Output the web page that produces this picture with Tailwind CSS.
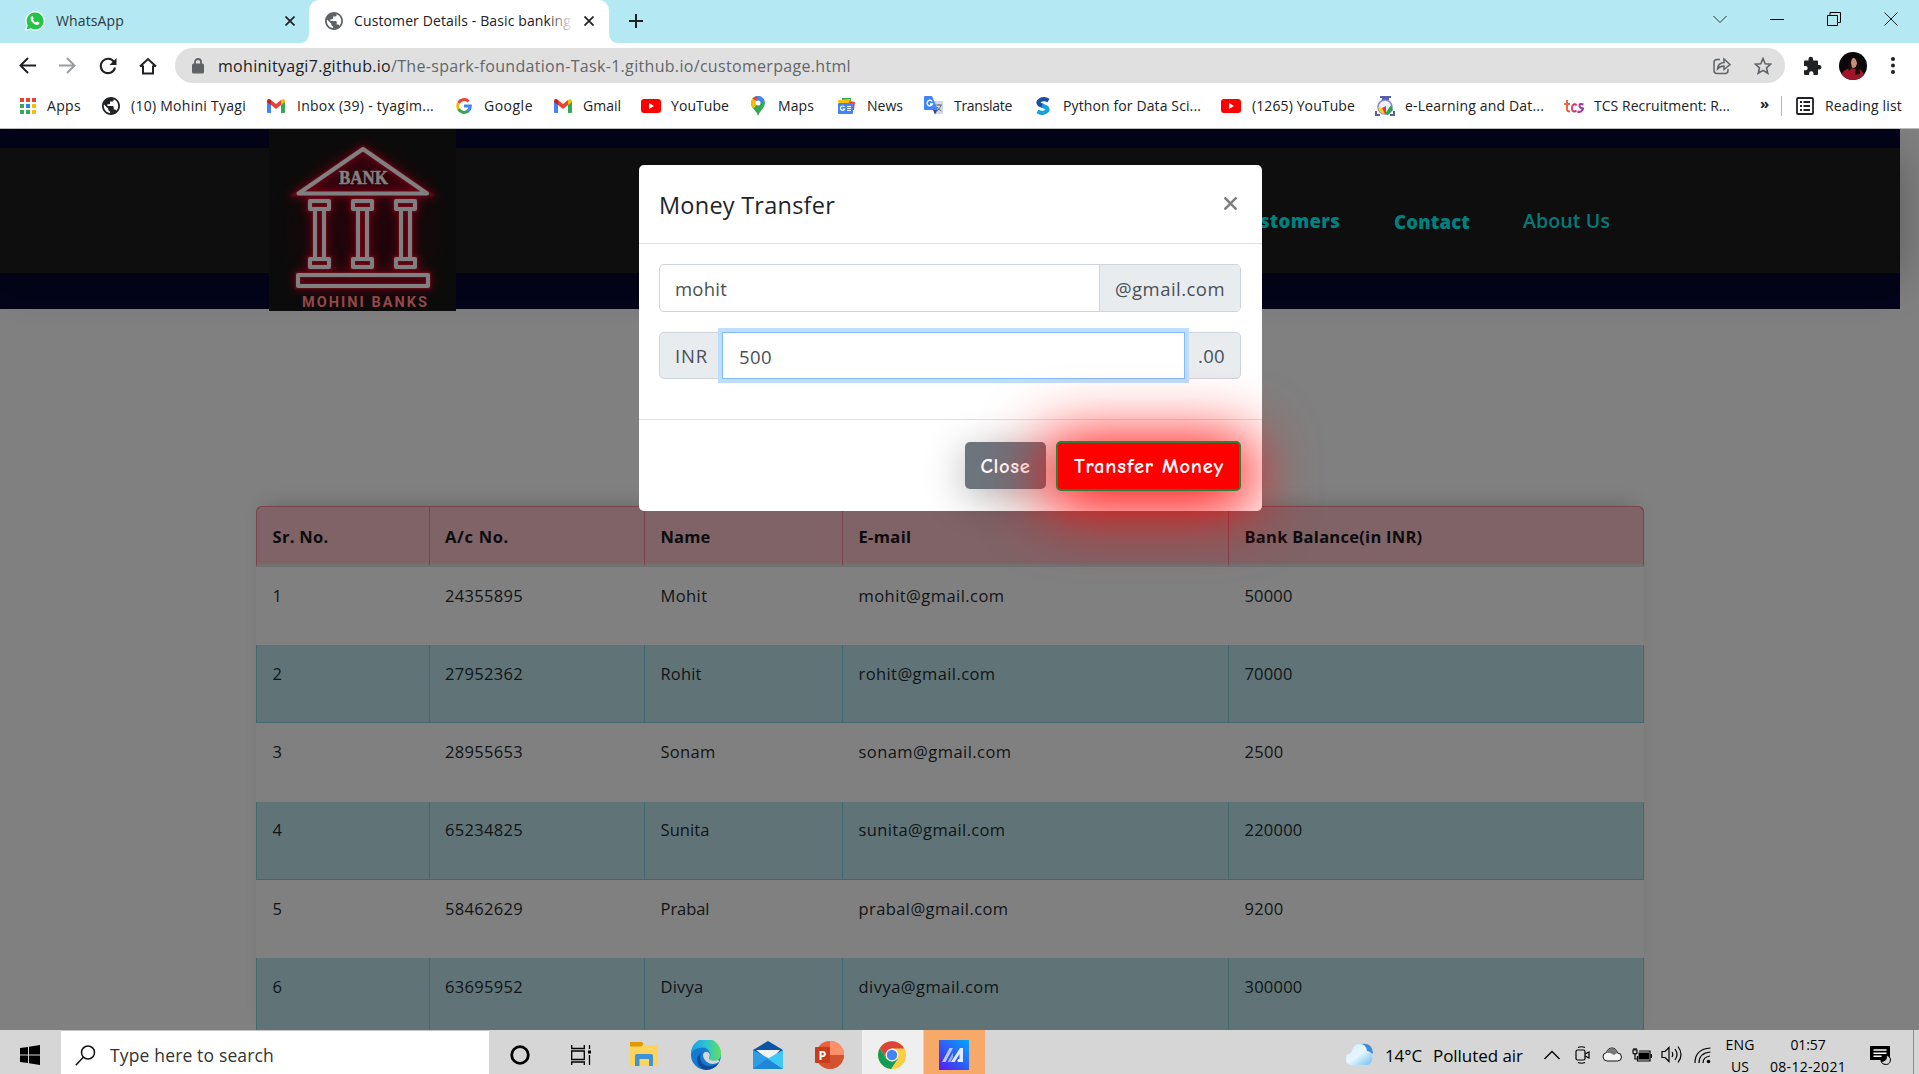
<!DOCTYPE html>
<html lang="en">
<head>
<meta charset="utf-8">
<title>Customer Details - Basic banking</title>
<script src="https://cdn.jsdelivr.net/npm/@tailwindcss/browser@4"></script>
</head>
<body class="w-[1919px] h-[1074px] overflow-hidden flex flex-col bg-white font-['Segoe_UI','Open_Sans',sans-serif] text-[#202124] whitespace-nowrap">
<svg class="hidden">
  <defs>
    <symbol id="gmail" viewBox="0 0 18 14"><path fill="#4285f4" d="M0 2v11q0 1 1 1h3V5z"/><path fill="#34a853" d="M14 14h3q1 0 1-1V2l-4 3z"/><path fill="#fbbc04" d="M14 1v5l4-3V2q0-2-2-2z"/><path fill="#ea4335" d="M4 6V1l5 4 5-4v5L9 10z"/><path fill="#c5221f" d="M0 2v1l4 3V1L3 .3Q0-.5 0 2"/></symbol>
    <symbol id="globe" viewBox="2 2 20 20"><path d="M12 2C6.480 2 2 6.480 2 12s4.480 10 10 10 10-4.480 10-10S17.520 2 12 2zm-1 17.930c-3.950-.49-7-3.850-7-7.930 0-.62.080-1.210.21-1.790L9 15v1c0 1.100.9 2 2 2v1.930zm6.900-2.540c-.26-.81-1-1.390-1.900-1.390h-1v-3c0-.55-.45-1-1-1H8v-2h2c.55 0 1-.45 1-1V7h2c1.100 0 2-.9 2-2v-.41c2.930 1.190 5 4.060 5 7.410 0 2.080-.8 3.970-2.100 5.390z"/></symbol>
    <symbol id="yt" viewBox="0 0 20 14"><rect width="20" height="14" rx="3" fill="#f00"/><path fill="#fff" d="M8 4v6l5-3z"/></symbol>
  </defs>
</svg>

<!-- tab strip -->
<header class="h-[43px] shrink-0 bg-[#b4e8f2] flex items-start text-[14px]">
  <div class="w-[309px] h-[43px] flex items-center pl-[25px] pb-[1px]">
    <svg class="w-5 h-5" viewBox="0 0 20 20"><path fill="#fff" d="M0 20 1.500 14.500A9.800 9.800 0 1 1 5.500 18.500z"/><path fill="#25c447" d="M1.500 18.500 2.800 14.300A8.500 8.500 0 1 1 5.800 17.300z"/><path fill="#fff" d="M6.500 5.500q1-1 1.500.2l.7 1.600q0 .5-.8 1.300 1.200 2.300 3.200 3 .8-1.200 1.300-1l1.800.9q.6.700-.3 1.800-1.600 1.500-4.600-.3Q5.800 10.600 5.600 8q0-1.600.9-2.500"/></svg>
    <span data-w="68" class="ml-[11px] w-[68px] -mt-[2px] text-[#2b3a3e]">WhatsApp</span>
    <svg class="ml-[161px] w-[10px] h-[10px]" viewBox="0 0 10 10" stroke="#202124" stroke-width="1.700"><path d="M.5.5l9 9M9.500.5l-9 9"/></svg>
  </div>
  <div class="relative w-[300px] h-[43px] bg-white rounded-t-[10px] flex items-center pl-[16px] pb-[1px]">
    <svg class="absolute -left-[10px] bottom-0 w-[10px] h-[10px]" viewBox="0 0 10 10"><path fill="#fff" d="M10 0v10H0Q10 10 10 0"/></svg>
    <svg class="absolute -right-[10px] bottom-0 w-[10px] h-[10px]" viewBox="0 0 10 10"><path fill="#fff" d="M0 0v10h10Q0 10 0 0"/></svg>
    <svg class="w-[18px] h-[18px]" fill="#5f6368"><use href="#globe"/></svg>
    <div class="relative ml-[11px] -mt-[2px] w-[217px] overflow-hidden"><span data-w="217">Customer Details - Basic banking</span><div class="absolute inset-y-0 right-0 w-[24px] bg-linear-to-r from-white/0 to-white/90"></div></div>
    <svg class="ml-[13px] w-[10px] h-[10px]" viewBox="0 0 10 10" stroke="#202124" stroke-width="1.700"><path d="M.5.5l9 9M9.500.5l-9 9"/></svg>
  </div>
  <svg class="ml-[19px] mt-[13px] w-4 h-4" viewBox="0 0 16 16" stroke="#202124" stroke-width="2"><path d="M8 1v14M1 8h14"/></svg>
  <div class="ml-auto flex items-center h-[37px] gap-[43px] pr-[21px]">
    <svg class="w-[14px] h-[14px]" viewBox="0 0 14 14" fill="none" stroke="#333"><path d="M.5 4 7 10.500 13.500 4"/></svg>
    <svg class="w-[14px] h-[14px]" viewBox="0 0 14 14" stroke="#000"><path d="M0 7.500h14"/></svg>
    <svg class="w-[14px] h-[14px]" viewBox="0 0 14 14" fill="none" stroke="#000"><path d="M.5 3.500h10v10H.5zM3 3.500V.5h10.500v10H11"/></svg>
    <svg class="w-[14px] h-[14px]" viewBox="0 0 14 14" stroke="#222"><path d="M.5.5l13 13M13.500.5l-13 13"/></svg>
  </div>
</header>

<!-- address bar -->
<div class="h-[45px] shrink-0 flex items-center pl-[19px]">
  <svg class="w-[17px] h-[17px]" viewBox="0 0 17 17" fill="none" stroke="#202124" stroke-width="2"><path d="M17 8.500H2M9 1 1.500 8.500 9 16"/></svg>
  <svg class="ml-[23px] w-[17px] h-[17px]" viewBox="0 0 17 17" fill="none" stroke="#9a9da0" stroke-width="2"><path d="M0 8.500h15M8 1l7.500 7.500L8 16"/></svg>
  <svg class="ml-[23px] w-[18px] h-[18px]" viewBox="0 0 18 18"><path d="M15 5A7.200 7.200 0 1 0 16 10.500" fill="none" stroke="#202124" stroke-width="2.100"/><path fill="#202124" d="M17.500 1v7h-7z"/></svg>
  <svg class="ml-[22px] w-[18px] h-[18px]" viewBox="0 0 18 18" fill="none" stroke="#202124" stroke-width="2"><path d="M4 8.500V16.500h10V8.500M1 9.500 9 2l8 7.500M4 9h-2.500M14 9h2.500"/></svg>
  <div class="ml-[18px] w-[1610px] h-[35px] rounded-full bg-[#e0e0e0] flex items-center pl-[17px] text-[16px]">
    <svg class="w-[12px] h-[16px]" viewBox="0 0 12 16"><path d="M3 6V4a3 3 0 0 1 6 0v2" fill="none" stroke="#5f6368" stroke-width="1.800"/><rect y="5.500" width="12" height="10" rx="1.500" fill="#5f6368"/></svg>
    <span data-w="173" class="ml-[14px] w-[173px]">mohinityagi7.github.io</span><span data-w="460" class="w-[460px] text-[#62666a]">/The-spark-foundation-Task-1.github.io/customerpage.html</span>
    <svg class="ml-[862px] w-[18px] h-[18px]" viewBox="0 0 18 18" fill="none" stroke="#5f6368" stroke-width="1.500"><path d="M7 2.500H4q-3 0-3 3v8q0 3 3 3h8q3 0 3-3v-1.500M4.500 12Q5 6 11 5.500V2l6 5.500-6 5V9Q7 9 4.500 12z"/></svg>
    <svg class="ml-[23px] w-[18px] h-[18px]" viewBox="0 0 18 18" fill="none" stroke="#5f6368" stroke-width="1.600"><path d="M9 1.500l2.200 5.200 5.600.4-4.300 3.700 1.300 5.500L9 13.400l-4.800 2.900 1.300-5.500L1.200 7.100l5.600-.4z"/></svg>
  </div>
  <svg class="ml-[18px] w-[19px] h-[19px]" viewBox="0 0 19 19" fill="#202124"><path d="M5.500 4.500V3a2.300 2.300 0 0 1 4.600 0v1.500H14q1 0 1 1V9h1.200a2.300 2.300 0 0 1 0 4.600H15V18q0 1-1 1h-3.500v-1.500a2.200 2.200 0 0 0-4.400 0V19H2q-1 0-1-1v-3.700h1.500a2.200 2.200 0 0 0 0-4.400H1V5.500q0-1 1-1z"/></svg>
  <svg class="ml-[17px] w-[28px] h-[28px] rounded-full" viewBox="0 0 28 28"><rect width="28" height="28" fill="#0b0708"/><path fill="#a0142c" d="M2 24Q4 17 12 16l10 2q3 4 4 8v3H2z"/><ellipse cx="14.500" cy="11" rx="3.500" ry="5" fill="#c58e7c"/><path fill="#1a0c0c" d="M10 10q1-6 5-5-3 2-3 6l1 5-3 3q-2-4 0-9M15 5q5 0 5 7l1 10-5 1 1-8q2-4 0-7z"/></svg>
  <svg class="ml-[24px] w-[4px] h-[17px]" viewBox="0 0 4 17" fill="#202124"><circle cx="2" cy="2" r="2"/><circle cx="2" cy="8.500" r="2"/><circle cx="2" cy="15" r="2"/></svg>
</div>

<!-- bookmarks -->
<nav class="h-[41px] shrink-0 border-b border-[#bdbdbd] flex items-center pl-[20px] pb-[5px] text-[14px]">
  <div class="w-[82px] flex items-center"><svg class="w-[16px] h-[16px]" viewBox="0 0 16 16"><path fill="#ea4335" d="M0 0h4v4H0zM6 0h4v4H6zM12 0h4v4h-4z"/><path fill="#34a853" d="M0 6h4v4H0zM0 12h4v4H0zM6 12h4v4H6z"/><path fill="#1a8cf0" d="M6 6h4v4H6z"/><path fill="#fbbc04" d="M12 6h4v4h-4zM12 12h4v4h-4z"/></svg><span data-w="34" class="ml-[11px]">Apps</span></div>
  <div class="w-[165px] flex items-center"><svg class="w-[18px] h-[18px]" fill="#202124"><use href="#globe"/></svg><span data-w="115" class="ml-[11px]">(10) Mohini Tyagi</span></div>
  <div class="w-[189px] flex items-center"><svg class="w-[18px] h-[14px]"><use href="#gmail"/></svg><span data-w="137" class="ml-[12px]">Inbox (39) - tyagim...</span></div>
  <div class="w-[98px] flex items-center"><svg class="w-[16px] h-[16px]" viewBox="0 0 16 16" fill="none" stroke-width="3"><path stroke="#ea4335" d="M2.500 5A6.300 6.300 0 0 1 12.600 3.500"/><path stroke="#fbbc04" d="M2.500 5a6.500 6.500 0 0 0 0 6"/><path stroke="#34a853" d="M2.500 11a6.300 6.300 0 0 0 9.500 2"/><path stroke="#4285f4" d="M11.500 13.300Q14.300 11.300 14.300 8H8"/></svg><span data-w="49" class="ml-[12px]">Google</span></div>
  <div class="w-[87px] flex items-center"><svg class="w-[18px] h-[14px]"><use href="#gmail"/></svg><span data-w="38" class="ml-[11px]">Gmail</span></div>
  <div class="w-[110px] flex items-center"><svg class="w-[20px] h-[14px]"><use href="#yt"/></svg><span data-w="58" class="ml-[10px]">YouTube</span></div>
  <div class="w-[86px] flex items-center"><svg class="w-[14px] h-[20px]" viewBox="0 0 14 20"><path fill="#34a853" d="M0 7a7 7 0 0 1 14 0q0 3-3 6.500T7 20q-.5-3-4-6.500T0 7"/><path fill="#4285f4" d="M5 .3Q11-1 13.500 5L9 8 4.500 5z"/><path fill="#ea4335" d="M1.500 2.500Q3 .5 5 .3L7 2.500 3 7z"/><path fill="#fbbc04" d="M1.500 2.500Q-1 6 .5 9.500L2.500 12.500l5-6z"/><circle cx="7" cy="7" r="2.500" fill="#fff"/></svg><span data-w="36" class="ml-[13px]">Maps</span></div>
  <div class="w-[87px] flex items-center"><svg class="w-[18px] h-[16px]" viewBox="0 0 18 16"><path fill="#34a853" d="M5 0h9v6H5z"/><path fill="#fbbc04" d="M1 2l12-1 1 5H2z"/><path fill="#ea4335" d="M12 3l6 1-1 8h-5z"/><rect x="1" y="5" width="15" height="11" rx="1" fill="#4285f4"/><path d="M7.500 9A2.200 2.200 0 1 0 7.700 11H5.800M10 8.500h4M10 10.500h4M10 12.500h4" fill="none" stroke="#fff" stroke-width="1.200"/></svg><span data-w="36" class="ml-[12px]">News</span></div>
  <div class="w-[112px] flex items-center"><svg class="w-[19px] h-[19px]" viewBox="0 0 19 19"><path fill="#d5d8dc" d="M8 5h10q1 0 1 1v11q0 1-1 1h-7z"/><path fill="#4285f4" d="M1 0h7l6 14H1q-1 0-1-1V1q0-1 1-1"/><path fill="#3049a8" d="M9 14h4.500L11 18.500z"/><path d="M8.200 5.500A2.800 2.800 0 1 0 8.500 8H6" fill="none" stroke="#fff" stroke-width="1.300"/><path d="M12 9h6M15 8v1.500M17 9q-1 4-4 6M13 11q2 3 4.500 4" fill="none" stroke="#64748b"/></svg><span data-w="58" class="ml-[11px]">Translate</span></div>
  <div class="w-[185px] flex items-center"><svg class="w-[14px] h-[18px]" viewBox="0 0 14 18" fill="none" stroke-width="4.200"><path stroke="#1c4fa0" d="M12.500 3.500Q8 1 4.500 3T3.500 7.500L7 9"/><path stroke="#14a0dc" d="M1.500 14.500Q6 17 9.500 15T10.500 10.500L6 8.500"/></svg><span data-w="138" class="ml-[13px]">Python for Data Sci...</span></div>
  <div class="w-[154px] flex items-center"><svg class="w-[20px] h-[14px]"><use href="#yt"/></svg><span data-w="103" class="ml-[11px]">(1265) YouTube</span></div>
  <div class="w-[189px] flex items-center"><svg class="w-[20px] h-[20px]" viewBox="0 0 20 20"><path d="M5 1h11M7 3h7" stroke="#5560a8" stroke-width="1.800"/><circle cx="10" cy="11" r="7" fill="#eef" stroke="#7c86c4" stroke-width="1.600"/><path fill="#28a745" d="M10 18l6-9 2 5-5 5z"/><path fill="#e33" d="M7 12l4-2v8H8z"/><path fill="#f8d020" d="M3 11l4 1 3 6q-6 0-7-7"/><path d="M1 15v4h4M19 15v4h-4" fill="none" stroke="#5560a8" stroke-width="2"/></svg><span data-w="139" class="ml-[10px]">e-Learning and Dat...</span></div>
  <div class="w-[196px] flex items-center"><svg class="w-[20px] h-[14px]" viewBox="0 0 20 14"><defs><linearGradient id="tcs" gradientUnits="userSpaceOnUse" x1="0" x2="20"><stop stop-color="#f08030"/><stop offset=".5" stop-color="#e0307a"/><stop offset="1" stop-color="#8040b0"/></linearGradient></defs><path d="M3 1v9.500q0 2 3 2M0 5h6M12.500 6.500Q11.500 4.500 9.500 5.500 7.500 7 8 10.500q1.500 3.500 4.500 1M19.500 5.500q-4-1.500-4 1t2.500 2.500-1 3.500q-2 .8-3.500 0" fill="none" stroke="url(#tcs)" stroke-width="2"/></svg><span data-w="136" class="ml-[10px]">TCS Recruitment: R...</span></div>
  <span class="w-[21px] font-bold text-[15px] -mt-[4px]">»</span>
  <div class="w-[15px] h-[20px] border-l border-[#b5b5b5]"></div>
  <svg class="w-[18px] h-[18px]" viewBox="0 0 18 18" fill="none" stroke="#202124" stroke-width="1.800"><rect x="1" y="1" width="16" height="16" rx="1"/><path d="M4 5h2M7.500 5H14M4 9h2M7.500 9H14M4 13h2M7.500 13H14"/></svg>
  <span data-w="77" class="ml-[11px]">Reading list</span>
</nav>

<!-- page -->
<main class="relative h-[901px] shrink-0 overflow-hidden bg-[#808080]">
  <div class="relative w-[1900px] h-[180px] bg-[#04041a] pt-[19px]">
    <div class="h-[125px] bg-[#0e0e0e] shadow-[0_5px_40px_rgba(0,0,0,0.3)] flex items-center justify-end pr-[290px] pt-[19px] text-[18.500px] text-[#008080]">
      <span data-w="105" class="w-[105px] mt-px font-extrabold">Customers</span>
      <span data-w="76" class="ml-[54px] w-[76px] mt-[3px] font-extrabold">Contact</span>
      <span data-w="87" class="ml-[53px] w-[87px] mt-px text-[19.500px] font-semibold text-[#047a7a]">About Us</span>
    </div>
    <svg class="absolute left-[269px] top-0 w-[187px] h-[182px]" viewBox="0 0 187 182">
      <defs><filter id="glow" x="-20%" y="-20%" width="140%" height="140%"><feGaussianBlur stdDeviation="5"/></filter><filter id="soft"><feGaussianBlur stdDeviation="1.300"/></filter>
      <radialGradient id="halo"><stop stop-color="#28030a"/><stop offset="1" stop-color="#0b0b0b"/></radialGradient>
      <g id="bank" fill="none"><path d="M94 20 29.500 64.500H158z"/><path d="M41 72h19v8H41zM84 72h19v8H84zM127 72h19v8H127zM41 130h19v8H41zM84 130h19v8H84zM127 130h19v8H127zM46 82v46M55 82v46M89 82v46M98 82v46M132 82v46M141 82v46M29 146h130v11H29z"/></g></defs>
      <rect width="187" height="182" fill="#0b0b0b"/>
      <ellipse cx="94" cy="98" rx="88" ry="92" fill="url(#halo)"/>
      <path fill="#2e030d" d="M94 20 31 64.500H156z"/>
      <use href="#bank" stroke="#8c0018" stroke-width="8" opacity=".55" filter="url(#glow)"/>
      <use href="#bank" stroke="#700a1c" stroke-width="6" opacity=".8" filter="url(#soft)"/>
      <use href="#bank" stroke="#808080" stroke-width="4" stroke-linejoin="round"/>
      <text x="94.500" y="55" text-anchor="middle" textLength="49" lengthAdjust="spacingAndGlyphs" font-family="Liberation Serif, serif" font-weight="bold" font-size="18.500" fill="#858080" stroke="#858080" stroke-width=".5">BANK</text>
      <text x="33" y="177.500" textLength="125" font-family="Roboto, sans-serif" font-weight="bold" font-size="14.500" fill="#96464a">MOHINI BANKS</text>
    </svg>
  </div>

  <table class="mt-[197px] ml-[256px] w-[1388px] table-fixed border-separate border-spacing-0 rounded-t-[6px] shadow-[0_-10px_18px_-10px_rgba(0,0,0,0.22)] text-left text-[16.500px] text-[#111416]">
    <colgroup><col class="w-[172.500px]"><col class="w-[215.500px]"><col class="w-[198px]"><col class="w-[386px]"><col class="w-[416px]"></colgroup>
    <thead>
      <tr class="h-[61px] bg-[#7f6366] text-[#0c0c0e] *:border-t *:border-t-[#7b434a] *:border-l *:border-l-[#7b434a] *:border-b-[3px] *:border-b-[#707173] *:pl-[15.500px] *:font-bold *:pt-[3px]">
        <th class="rounded-tl-[6px]"><span data-w="56">Sr. No.</span></th><th><span data-w="64">A/c No.</span></th><th><span data-w="50">Name</span></th><th><span data-w="53">E-mail</span></th><th class="rounded-tr-[6px] border-r border-r-[#7b434a]"><span data-w="178">Bank Balance(in INR)</span></th>
      </tr>
    </thead>
    <tbody>
      <tr class="h-[78px] bg-[#808080] align-top *:pl-[16.500px] *:pt-[17px]"><td>1</td><td><span data-w="78">24355895</span></td><td><span data-w="47">Mohit</span></td><td><span data-w="146">mohit@gmail.com</span></td><td><span data-w="48">50000</span></td></tr>
      <tr class="h-[78px] bg-[#607377] align-top *:border-b *:border-l *:border-[#42696f] *:pl-[15.500px] *:pt-[17px]"><td>2</td><td><span data-w="78">27952362</span></td><td><span data-w="41">Rohit</span></td><td><span data-w="137">rohit@gmail.com</span></td><td class="border-r"><span data-w="48">70000</span></td></tr>
      <tr class="h-[79px] bg-[#808080] align-top *:pl-[16.500px] *:pt-[17px]"><td>3</td><td><span data-w="78">28955653</span></td><td><span data-w="55">Sonam</span></td><td><span data-w="153">sonam@gmail.com</span></td><td><span data-w="39">2500</span></td></tr>
      <tr class="h-[78px] bg-[#607377] align-top *:border-b *:border-l *:border-[#42696f] *:pl-[15.500px] *:pt-[16px]"><td>4</td><td><span data-w="78">65234825</span></td><td><span data-w="49">Sunita</span></td><td><span data-w="147">sunita@gmail.com</span></td><td class="border-r"><span data-w="58">220000</span></td></tr>
      <tr class="h-[78px] bg-[#808080] align-top *:pl-[16.500px] *:pt-[17px]"><td>5</td><td><span data-w="78">58462629</span></td><td><span data-w="49">Prabal</span></td><td><span data-w="150">prabal@gmail.com</span></td><td><span data-w="39">9200</span></td></tr>
      <tr class="h-[78px] bg-[#607377] align-top *:border-b *:border-l *:border-[#42696f] *:pl-[15.500px] *:pt-[17px]"><td>6</td><td><span data-w="78">63695952</span></td><td><span data-w="43">Divya</span></td><td><span data-w="141">divya@gmail.com</span></td><td class="border-r"><span data-w="58">300000</span></td></tr>
    </tbody>
  </table>

  <!-- transfer dialog -->
  <section class="absolute left-[639px] top-[36px] w-[623px] h-[346px] rounded-[5px] bg-white text-[18.500px] text-[#495057] flex flex-col">
    <div class="h-[79px] border-b border-[#dee2e6] flex justify-between pl-[20px] pr-[25px]">
      <span data-w="176" class="mt-[22px] text-[23.500px] leading-[36px] text-[#212529] font-medium">Money Transfer</span>
      <svg class="mt-[32px] w-[13px] h-[13px]" viewBox="0 0 13 13" stroke="#7f7f7f" stroke-width="2.600"><path d="M.5.5l12 12M12.500.5l-12 12"/></svg>
    </div>
    <div class="h-[176px] border-b border-[#dee2e6] pl-[20px] pr-[21px] pt-[20px] flex flex-col">
      <div class="h-[48px] flex border border-[#ced4da] rounded-[5px] overflow-hidden">
        <div class="w-[440px] shrink-0 border-r border-[#ced4da] flex items-center pl-[15px] pt-[1px]"><span data-w="52">mohit</span></div>
        <div class="flex-1 bg-[#e9ecef] flex items-center pl-[15px] pt-px"><span data-w="110">@gmail.com</span></div>
      </div>
      <div class="mt-[20px] h-[47px] flex border border-[#ced4da] rounded-[5px] bg-[#e9ecef]">
        <div class="w-[62px] shrink-0 flex items-center pl-[15px]"><span data-w="33">INR</span></div>
        <div class="relative -my-px w-[463px] shrink-0 bg-white border border-[#80bdff] shadow-[0_0_0_4px_#bfdeff] flex items-center pl-[16px] pt-[2px]"><span data-w="33">500</span></div>
        <div class="flex-1 flex items-center justify-end pr-[15px]"><span data-w="27">.00</span></div>
      </div>
    </div>
    <div class="flex-1 flex items-center justify-end gap-[10px] pr-[21px] font-['Comic_Sans_MS','Comic_Neue','Open_Sans',cursive] text-[20.500px] font-bold text-white">
      <div class="w-[81px] h-[47px] rounded-[5px] bg-[#6c757d] shadow-[0_8px_40px_rgba(0,0,0,0.3)] flex items-center justify-center pt-[3px]"><span data-w="50">Close</span></div>
      <div class="relative w-[185px] h-[50px] rounded-[5px] bg-[#f00] border-2 border-[#28803a] shadow-[0_8px_62px_12px_rgba(255,0,0,0.95)] flex items-center justify-center pt-[3px] pl-px"><span data-w="150">Transfer Money</span></div>
    </div>
  </section>
</main>

<!-- taskbar -->
<footer class="h-[44px] shrink-0 bg-[#d6d6d6] flex text-black">
  <div class="w-[61px] flex items-center pl-[20px] pt-[5px]"><svg class="w-[20px] h-[20px]" viewBox="0 0 20 20"><path d="M0 3l8-1.100v7.600H0zM9 1.700 20 0v9.500H9zM0 10.500h8v7.600L0 17zM9 10.500h11V20L9 18.300z"/></svg></div>
  <div class="w-[428px] h-[44px] border-t border-[#c4c4c4] bg-white flex items-center pl-[14px] pt-[5px]">
    <svg class="w-[21px] h-[21px]" viewBox="0 0 21 21" fill="none" stroke="#111" stroke-width="1.500"><circle cx="13" cy="7.500" r="6.500"/><path d="M8.500 12 .8 20.200"/></svg>
    <span data-w="164" class="ml-[14px] mt-px text-[17.500px] text-[#333]">Type here to search</span>
  </div>
  <div class="w-[61px] flex items-center justify-center pt-[6px]"><svg class="w-[20px] h-[20px]" viewBox="0 0 20 20"><circle cx="10" cy="10" r="8.300" fill="none" stroke="#000" stroke-width="2.800"/></svg></div>
  <div class="w-[61px] flex items-center justify-center pt-[5px]"><svg class="w-[20px] h-[20px]" viewBox="0 0 20 20" fill="none" stroke="#000" stroke-width="1.300"><path d="M.7 0v3.500h12.600V0M.7 6h12.600v8.500H.7zM.7 20v-3h12.600v3M18.500 0v4M18.500 10v10"/><path stroke="none" fill="#000" d="M17 5.500h3v3h-3z"/></svg></div>
  <div class="w-[65px] flex items-center justify-center pt-[4px]"><svg class="w-[28px] h-[24px]" viewBox="0 0 28 24"><path fill="#ffd45c" d="M0 3h28v20q0 1-1 1H1q-1 0-1-1z"/><path fill="#e09a00" d="M0 0h12q2 1 1 3L11 4.500H0z"/><path fill="#3f93d4" d="M5 14q0-2 2-2h14q2 0 2 2v10h-4v-7H9.500v7H5z"/></svg></div>
  <div class="w-[60px] flex items-center justify-center pt-[5px]"><svg class="w-[30px] h-[30px]" viewBox="0 0 30 30"><defs><linearGradient id="edge"><stop stop-color="#1c9de0"/><stop offset=".5" stop-color="#2cc3d4"/><stop offset="1" stop-color="#62e05a"/></linearGradient></defs><circle cx="15" cy="15" r="15" fill="#1479d0"/><path fill="url(#edge)" d="M0 13A15 15 0 0 1 30 14q0 7-7 7-5 0-5-3 2-2 1-5Q16 6 8 8 3 9 0 13"/><path fill="#114a98" d="M10 13q-3 6 2 11 7 5 16-1-5 7-13 7Q6 28 6 19q1-4 4-6"/><path fill="#d6d6d6" d="M12 15q1-4 5-3 3 2 1 6 1 4 9 2 1.500 0 1 2-7 4-12 0-4-3-4-7"/></svg></div>
  <div class="w-[63px] flex items-center justify-center pt-[5px]"><svg class="w-[30px] h-[28px]" viewBox="0 0 30 28"><path fill="#0a55a5" d="M0 9 15 0l15 9v6H0z"/><path fill="#f3f3f3" d="M3 9h24L17 20z"/><path fill="#2d9de6" d="M0 9v19h30L15 17z"/><path fill="#40c8f4" d="M30 9v19L15 17.500z"/><path fill="#1e86d4" d="M0 28l14-10 3 2L30 28z"/></svg></div>
  <div class="w-[61px] flex items-center justify-center pt-[5px]"><svg class="w-[29px] h-[28px]" viewBox="0 0 29 28"><circle cx="15" cy="14" r="14" fill="#e8603c"/><path fill="#ff8f6b" d="M15 0a14 14 0 0 1 14 14H15z"/><path fill="#d35230" d="M15 14h14a14 14 0 0 1-26 7z"/><rect y="6" width="15" height="16" rx="1" fill="#c43e1c"/><text x="7.500" y="18.500" text-anchor="middle" font-family="Open Sans" font-size="12.500" font-weight="bold" fill="#fff">P</text></svg></div>
  <div class="ml-[2px] w-[61px] bg-[#efefef] flex items-center justify-center pt-[5px] pr-px"><svg class="w-[28px] h-[28px]" viewBox="0 0 28 28"><circle cx="14" cy="14" r="14" fill="#ffcd42"/><path fill="#db4437" d="M1.900 7A14 14 0 0 1 26.100 7.500H14L8 17z"/><path fill="#0f9d58" d="M1.900 7A14 14 0 0 0 13 28l7-10.500-6 3-6-3z"/><circle cx="14" cy="14" r="6.500" fill="#fff"/><circle cx="14" cy="14" r="5.200" fill="#4285f4"/></svg></div>
  <div class="ml-px w-[61px] bg-[#f7a969] flex items-center justify-center pt-[5px] pr-px"><svg class="w-[30px] h-[30px]" viewBox="0 0 30 30"><defs><linearGradient id="armoury" x1="0" y1="1" x2="1" y2="0"><stop stop-color="#5a18f0"/><stop offset="1" stop-color="#00a8ff"/></linearGradient></defs><rect width="30" height="30" fill="url(#armoury)"/><path fill="#b9c8ff" d="M3 22 10.500 8H14L6.500 22z"/><path fill="#e2eaff" d="M12 22 21 8h3v14h-3.500v-8L15.500 22z"/><path fill="#8fb0ff" d="M8.500 22 14 12.500V17l-2.500 5z"/><circle cx="20" cy="20.500" r="1.500" fill="#fff"/></svg></div>
  <div class="ml-auto flex items-center text-[17px] pt-[5px]">
    <svg class="w-[27px] h-[22px] -mt-[2px]" viewBox="0 0 27 22"><defs><linearGradient id="cloud" x1="0" y1="0" x2="1" y2="1"><stop stop-color="#ccebff"/><stop offset=".5" stop-color="#e8f6ff"/><stop offset="1" stop-color="#68bdf0"/></linearGradient></defs><path fill="#3c8fd6" d="M15 1q11-2 12 9l-6 3z"/><path fill="url(#cloud)" d="M6 22a6 6 0 0 1-1-12Q7 1 14 1q6 0 7 7 5 0 5.500 6 0 7-6 8z"/></svg>
    <span data-w="37" class="ml-[12px] w-[37px] mt-[3px]">14°C</span>
    <span data-w="90" class="ml-[11px] w-[90px] mt-[3px]">Polluted air</span>
    <svg class="ml-[21px] w-[16px] h-[10px]" viewBox="0 0 16 10" fill="none" stroke="#000" stroke-width="1.300"><path d="M.5 9 8 1.500 15.500 9"/></svg>
    <svg class="ml-[15px] w-[15px] h-[18px]" viewBox="0 0 15 18" fill="none" stroke="#000" stroke-width="1.200"><rect x="1" y="4" width="9" height="10" rx="1.500"/><path d="M10 8l4-2v6l-4-2M3 1.500q3.500-1.500 7 0M3 16.500q3.500 1.500 7 0"/></svg>
    <svg class="ml-[12px] w-[20px] h-[15px]" viewBox="0 0 20 15" stroke="#111"><path fill="#f3f3f3" d="M5 14A4.300 4.300 0 0 1 4.500 5.500Q6 1 10 1t5.500 5a4 4 0 0 1 0 8z"/><path fill="#777" stroke="none" d="M5 6Q6 1.500 10 1.500T15 6l-3 2-4-2z"/></svg>
    <svg class="ml-[10px] w-[20px] h-[14px]" viewBox="0 0 20 14"><path d="M6.500 4.500h10.500v7H6.500zM18.500 6H20v4h-1.500z"/><path d="M1 2h4v3q-2 2-4 0zM2 0v2M4 0v2M3 6v5h2M7 3h11v10H5.500v-5" fill="none" stroke="#000" stroke-width="1.200"/></svg>
    <svg class="ml-[9px] w-[21px] h-[19px]" viewBox="0 0 21 19" fill="none" stroke="#000" stroke-width="1.200"><path d="M1 6.500h3L8 2.500v14L4 12.500H1zM11 7q1.500 2.500 0 5M14 4q4 5.500 0 11M17 1.500q6 8 0 16"/></svg>
    <svg class="ml-[12px] w-[17px] h-[18px]" viewBox="0 0 17 18" fill="none" stroke="#000" stroke-width="1.200"><path d="M1 17Q1 3 16.500 2M5 17Q5 7 16.500 6M9 17q0-6 7-7"/><circle cx="14.500" cy="15.500" r="1.800" fill="#000" stroke="none"/></svg>
  </div>
  <div class="ml-[13px] w-[32px] flex flex-col items-center text-[14px] leading-[22px] pt-[4px]"><span data-w="29" class="block">ENG</span><span data-w="18" class="block">US</span></div>
  <div class="ml-[13px] w-[78px] flex flex-col items-center text-[14px] leading-[22px] pt-[4px]"><span data-w="35" class="block">01:57</span><span data-w="76" class="block">08-12-2021</span></div>
  <div class="ml-[20px] w-[46px] flex items-center pt-[6px] pl-[3px]"><svg class="w-[21px] h-[21px]" viewBox="0 0 21 21"><path d="M0 1h20v14h-5v5l-5-5H0z"/><path d="M3.500 5h13M3.500 8.200h13M3.500 11.300h8" stroke="#fff" stroke-width="1.500"/><path d="M16 10q2 6-5 6.500 1.500 3.500 5.500 3T20.500 14Q20 11 16 10" fill="#d6d6d6" stroke="#000"/></svg></div>
  <div class="w-[6px] border-l border-[#8c8c8c]"></div>
</footer>

<script>
  // Track each label so that it fills its intended width.
  function fitLabels() {
    document.querySelectorAll('[data-w]').forEach(function (el) {
      el.style.letterSpacing = '0px';
      var r = document.createRange();
      r.selectNodeContents(el);
      var gap = (Number(el.dataset.w) - r.getBoundingClientRect().width) / el.textContent.length;
      el.style.letterSpacing = gap.toFixed(3) + 'px';
    });
  }
  fitLabels();
  window.addEventListener('load', function () {
    fitLabels();
    document.fonts.ready.then(fitLabels);
    requestAnimationFrame(fitLabels);
  });
</script>
</body>
</html>
